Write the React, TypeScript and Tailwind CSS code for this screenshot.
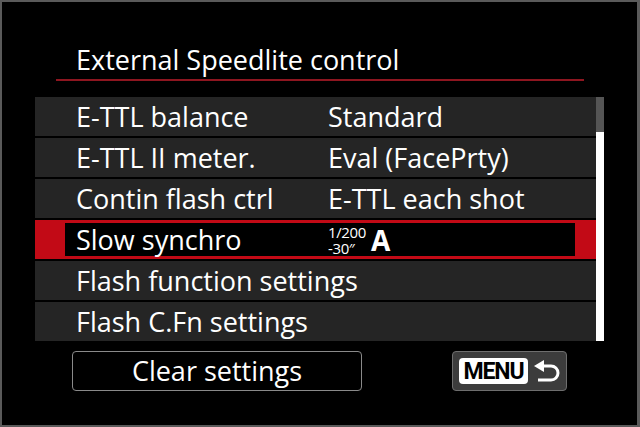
const ROWS: { label: string; value?: string }[] = [
  { label: "E-TTL balance", value: "Standard" },
  { label: "E-TTL II meter.", value: "Eval (FacePrty)" },
  { label: "Contin flash ctrl", value: "E-TTL each shot" },
  { label: "Slow synchro" },
  { label: "Flash function settings" },
  { label: "Flash C.Fn settings" },
];

const SELECTED = 3;

const ReturnIcon = () => (
  <svg width="30" height="30" viewBox="0 0 30 30" fill="none">
    <path d="M2 10 L12 4 L12 16 Z" fill="white" />
    <path
      d="M11 10 H19 A7 7 0 0 1 19 24 H6"
      stroke="white"
      strokeWidth="3"
      fill="none"
    />
  </svg>
);

export default function App() {
  return (
    <div
      className="h-[427px] w-[640px] border-2 border-r-[3px] border-[#5a5a5a] bg-black text-white"
      style={{ fontFamily: '"Open Sans", "Noto Sans", sans-serif' }}
    >
      {/* Título */}
      <div className="ml-[54px] w-[528px] border-b-2 border-[#8e1620] pt-[42px] pb-[3px]">
        <p className="pl-[20px] text-[27px] leading-[32px]">
          External Speedlite control
        </p>
      </div>

      {/* Lista de opciones */}
      <div className="ml-[33px] mt-[16px] flex">
        <div className="flex w-[561px] flex-col gap-[2px]">
          {ROWS.map((row, i) =>
            i === SELECTED ? (
              <div
                key={row.label}
                className="flex h-[39px] items-center bg-[#c20a16] py-[3px] pl-[30px] pr-[21px]"
              >
                <div className="flex h-full w-full items-center bg-black pl-[11px]">
                  <span className="w-[252px] text-[27px] leading-none">
                    {row.label}
                  </span>
                  <span className="flex items-center gap-[5px]">
                    <span className="flex flex-col text-[15px] font-medium leading-[16px] tracking-tight">
                      <span>1/200</span>
                      <span>-30″</span>
                    </span>
                    <span className="text-[28px] font-bold leading-none">A</span>
                  </span>
                </div>
              </div>
            ) : (
              <div
                key={row.label}
                className="flex h-[39px] items-center bg-[#252525] pl-[41px]"
              >
                <span className="w-[252px] whitespace-nowrap text-[27px] leading-none">
                  {row.label}
                </span>
                {row.value && (
                  <span className="text-[27px] leading-none">{row.value}</span>
                )}
              </div>
            )
          )}
        </div>
        <div className="flex w-[8px] flex-col">
          <div className="h-[35px] bg-[#555555]" />
          <div className="flex-1 bg-white" />
        </div>
      </div>

      {/* Botones inferiores */}
      <div className="mt-[10px] flex items-center">
        <div className="ml-[70px] flex h-[40px] w-[290px] items-center justify-center rounded-[4px] border border-[#8a8a8a] text-[27px]">
          Clear settings
        </div>
        <div className="ml-[90px] flex h-[40px] w-[115px] items-center gap-[4px] rounded-[4px] border border-[#6e6e6e] bg-[#3c3c3c] pl-[6px]">
          <span
            className="flex h-[26px] w-[69px] items-center justify-center rounded-[4px] bg-white text-[23px] font-bold leading-none tracking-tighter text-black"
            style={{ fontFamily: "Roboto, sans-serif" }}
          >
            MENU
          </span>
          <ReturnIcon />
        </div>
      </div>
    </div>
  );
}
